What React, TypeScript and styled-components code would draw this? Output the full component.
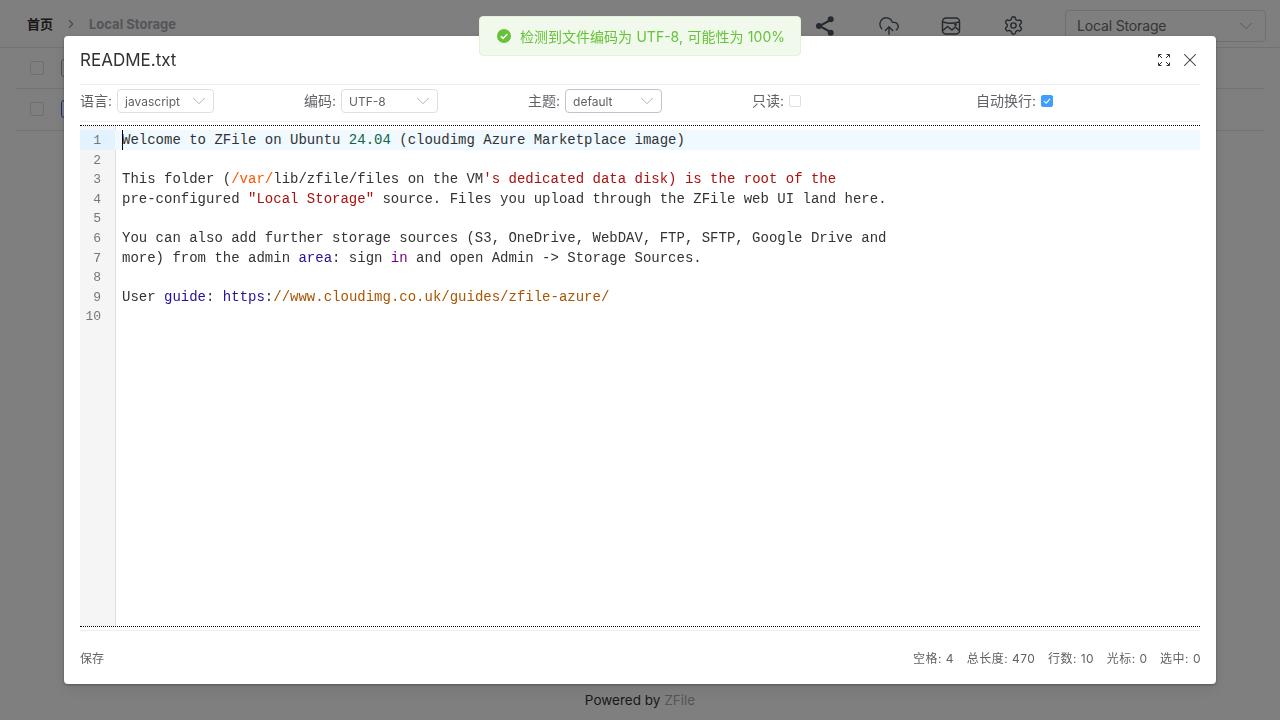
import styled, { createGlobalStyle } from 'styled-components';
import { ChevronDown, ChevronRight, CloudUpload, Settings, X } from 'lucide-react';

const sansStack = `Inter, 'Noto Sans CJK SC', sans-serif`;
const monoStack = `'Liberation Mono', monospace`;

const GlobalStyle = createGlobalStyle`
  html, body {
    margin: 0;
    padding: 0;
    background: #fff;
  }
  * {
    box-sizing: border-box;
  }
  body {
    font-family: ${sansStack};
    font-size: 14px;
    overflow: hidden;
  }
`;

type Token = { text: string; kind?: 'number' | 'regex' | 'string' | 'atom' | 'keyword' | 'comment' };

const lines: Token[][] = [
  [{ text: 'Welcome to ZFile on Ubuntu ' }, { text: '24.04', kind: 'number' }, { text: ' (cloudimg Azure Marketplace image)' }],
  [],
  [
    { text: 'This folder (' },
    { text: '/var/', kind: 'regex' },
    { text: 'lib/zfile/files on the VM' },
    { text: "'s dedicated data disk) is the root of the", kind: 'string' },
  ],
  [
    { text: 'pre-configured ' },
    { text: '"Local Storage"', kind: 'string' },
    { text: ' source. Files you upload through the ZFile web UI land here.' },
  ],
  [],
  [{ text: 'You can also add further storage sources (S3, OneDrive, WebDAV, FTP, SFTP, Google Drive and' }],
  [
    { text: 'more) from the admin ' },
    { text: 'area', kind: 'atom' },
    { text: ': sign ' },
    { text: 'in', kind: 'keyword' },
    { text: ' and open Admin -> Storage Sources.' },
  ],
  [],
  [
    { text: 'User ' },
    { text: 'guide', kind: 'atom' },
    { text: ': ' },
    { text: 'https', kind: 'atom' },
    { text: ':' },
    { text: '//www.cloudimg.co.uk/guides/zfile-azure/', kind: 'comment' },
  ],
  [],
];

const tokenColors: Record<string, string> = {
  number: '#116644',
  regex: '#ff5500',
  string: '#aa1111',
  atom: '#221199',
  keyword: '#770088',
  comment: '#aa5500',
};

const Page = styled.div`
  height: 720px;
  display: flex;
  flex-direction: column;
  background: #fff;
`;

const TopBar = styled.header`
  height: 48px;
  padding: 0 14px 0 27px;
  display: flex;
  align-items: center;
  border-bottom: 1px solid #e4e7ed;
`;

const Crumbs = styled.div`
  flex: 1;
  display: flex;
  align-items: center;
  font-size: 13px;
  font-weight: 700;
`;

const Crumb = styled.span<{ $muted?: boolean }>`
  color: ${(props) => (props.$muted ? '#a8abb2' : '#303133')};
`;

const CrumbSep = styled.span`
  width: 36px;
  display: flex;
  justify-content: center;
  color: #909399;
`;

const ToolIcons = styled.div`
  display: flex;
  align-items: center;
  gap: 40px;
  margin: 4px 41px 0 0;
  color: #4b5563;
`;

const ToolIcon = styled.span<{ $extra?: number }>`
  width: 22px;
  height: 24px;
  margin-right: ${(props) => props.$extra ?? 0}px;
  display: flex;
  align-items: center;
  justify-content: center;
`;

const StorageSelect = styled.div`
  width: 201px;
  height: 32px;
  margin-top: 4px;
  padding: 0 8px 0 11px;
  display: flex;
  align-items: center;
  justify-content: space-between;
  color: #6a6c70;
  letter-spacing: -0.15px;
  border: 1px solid #dcdfe6;
  border-radius: 4px;
`;

const FileRow = styled.div`
  height: 41px;
  margin: 0 16px 0 15px;
  padding-left: 15px;
  display: flex;
  align-items: center;
  gap: 17px;
  border-bottom: 1px solid #e4e7ed;

  & + & {
    height: 42px;
    padding-bottom: 1px;
  }
`;

const RowCheck = styled.span`
  width: 14px;
  height: 14px;
  border: 1px solid #dcdfe6;
  border-radius: 2px;
`;

const RowIcon = styled.span<{ $tint: string }>`
  width: 16px;
  height: 18px;
  border: 1.5px solid ${(props) => props.$tint};
  border-radius: 3px;
`;

const PageFooter = styled.footer`
  margin-top: auto;
  height: 41px;
  display: flex;
  align-items: center;
  justify-content: center;
  color: #333;
  font-size: 13.5px;
`;

const Brand = styled.span`
  margin-left: 4px;
  color: #a8abb2;
`;

const Overlay = styled.div`
  position: fixed;
  inset: 0;
  display: flex;
  align-items: center;
  justify-content: center;
  background: rgba(0, 0, 0, 0.5);
`;

const Dialog = styled.div`
  width: 1152px;
  height: 648px;
  padding: 0 16px;
  display: flex;
  flex-direction: column;
  background: #fff;
  border-radius: 4px;
  box-shadow: 0 1px 3px rgba(0, 0, 0, 0.3), 0 6px 16px rgba(0, 0, 0, 0.08);
`;

const DialogHeader = styled.div`
  height: 49px;
  flex: none;
  display: flex;
  align-items: center;
  justify-content: space-between;
  border-bottom: 1px solid #ebeef5;
`;

const DialogTitle = styled.div`
  font-size: 17px;
  color: #303133;
`;

const HeaderActions = styled.div`
  display: flex;
  align-items: center;
  gap: 8px;
  margin-right: -1px;
  color: #303133;
`;

const Options = styled.div`
  height: 37px;
  flex: none;
  padding-bottom: 4px;
  display: grid;
  grid-template-columns: repeat(5, 224px);
  align-items: center;
  border-bottom: 1px solid #ebeef5;
`;

const Option = styled.div`
  display: flex;
  align-items: center;
  color: #606266;
  font-size: 14px;
`;

const OptionLabel = styled.span`
  margin-bottom: 2px;
`;

const MiniSelect = styled.div<{ $active?: boolean }>`
  width: 97px;
  height: 24px;
  margin-left: 5px;
  padding: 0 3px 0 7px;
  display: flex;
  align-items: center;
  justify-content: space-between;
  font-size: 12px;
  color: #606266;
  border: 1px solid ${(props) => (props.$active ? '#c0c4cc' : '#dcdfe6')};
  border-radius: 4px;
`;

const Check = styled.span<{ $checked?: boolean }>`
  width: 12px;
  height: 12px;
  margin-left: 5px;
  display: flex;
  align-items: center;
  justify-content: center;
  background: ${(props) => (props.$checked ? '#409eff' : '#fff')};
  border: 1px solid ${(props) => (props.$checked ? '#409eff' : '#dcdfe6')};
  border-radius: 2px;
`;

const Editor = styled.div`
  flex: 1;
  min-height: 0;
  margin-top: 3px;
  padding-top: 4px;
  position: relative;
  font-family: ${monoStack};
  font-size: 14px;
  line-height: 21px;
  color: #333;
  border-top: 1px dotted #000;
  border-bottom: 1px dotted #000;
`;

const Gutter = styled.div`
  position: absolute;
  top: 0;
  bottom: 0;
  left: 0;
  width: 36px;
  background: #f5f5f5;
  border-right: 1px solid #ddd;
`;

const CodeLine = styled.div<{ $active?: boolean }>`
  height: 19.6px;
  padding-left: 42px;
  position: relative;
  white-space: pre;
  background: ${(props) => (props.$active ? '#f0f9ff' : 'transparent')};
`;

const LineNumber = styled.span<{ $active?: boolean }>`
  position: absolute;
  top: 0;
  left: 0;
  bottom: 0;
  width: 35px;
  padding-right: 14px;
  text-align: right;
  font-size: 13px;
  color: #777;
  background: ${(props) => (props.$active ? '#e2f2fe' : 'transparent')};
`;

const Caret = styled.span`
  position: absolute;
  top: 0;
  bottom: 0;
  left: 42px;
  width: 1px;
  background: #000;
`;

const Tok = styled.span<{ $kind?: string }>`
  color: ${(props) => (props.$kind ? tokenColors[props.$kind] : 'inherit')};
`;

const DialogFooter = styled.div`
  height: 54px;
  flex: none;
  margin-top: 3px;
  display: flex;
  align-items: center;
  justify-content: space-between;
  font-size: 12px;
  color: #606266;
  border-top: 1px solid #ebeef5;
`;

const Stats = styled.div`
  display: flex;
  gap: 12.5px;
  margin-right: -1px;
  letter-spacing: 0.5px;
`;

const Toast = styled.div`
  position: fixed;
  top: 16px;
  left: 479px;
  width: 322px;
  height: 40px;
  padding-left: 17px;
  display: flex;
  align-items: center;
  gap: 9px;
  font-size: 14px;
  word-spacing: 0.5px;
  color: #67c23a;
  background: #f0f9eb;
  border: 1px solid #e1f3d8;
  border-radius: 4px;
`;

const ShareIcon = () => (
  <svg width="22" height="22" viewBox="0 0 22 22" fill="currentColor">
    <path d="M16.5 5 5.5 11l11 6" fill="none" stroke="currentColor" strokeWidth="2" />
    <circle cx="16.7" cy="4.3" r="3" />
    <circle cx="5" cy="11" r="3" />
    <circle cx="16.7" cy="17.7" r="3" />
  </svg>
);

const PhotoWalletIcon = () => (
  <svg width="20" height="20" viewBox="0 0 20 20" fill="none" stroke="currentColor" strokeWidth="1.5">
    <rect x="1.5" y="2" width="17" height="16" rx="3.5" />
    <path d="M2 6c5 1.6 11 1.6 16 0" />
    <path d="M2 14.5 6.5 10.5 11 14l3.2-3 4 3.5" />
    <circle cx="14.5" cy="8.8" r="0.6" />
  </svg>
);

const FullScreenIcon = () => (
  <svg width="14" height="14" viewBox="0 0 14 14" fill="none" stroke="currentColor" strokeWidth="1">
    <path d="M1.5 4.5v-3h3M9.5 1.5h3v3M12.5 9.5v3h-3M4.5 12.5h-3v-3" />
    <path d="M2 2 5 5M12 2 9 5M12 12 9 9M2 12 5 9" />
  </svg>
);

const CircleCheck = () => (
  <svg width="14" height="14" viewBox="0 0 14 14">
    <circle cx="7" cy="7" r="7" fill="#67c23a" />
    <path d="M3.8 7.2 6.1 9.4 10.3 5" fill="none" stroke="#fff" strokeWidth="1.5" />
  </svg>
);

const TickIcon = () => (
  <svg width="8" height="8" viewBox="0 0 8 8">
    <path d="M1 4.2 3.2 6.2 7 1.8" fill="none" stroke="#fff" strokeWidth="1.1" />
  </svg>
);

const SelectArrow = () => <ChevronDown size={22} strokeWidth={1} color="#a8abb2" />;

const App = () => {
  return (
    <>
      <GlobalStyle />
      <Page>
        <TopBar>
          <Crumbs>
            <Crumb>首页</Crumb>
            <CrumbSep>
              <ChevronRight size={14} />
            </CrumbSep>
            <Crumb $muted>Local Storage</Crumb>
          </Crumbs>
          <ToolIcons>
            <ToolIcon $extra={2}>
              <ShareIcon />
            </ToolIcon>
            <ToolIcon>
              <CloudUpload size={24} strokeWidth={1.5} />
            </ToolIcon>
            <ToolIcon>
              <PhotoWalletIcon />
            </ToolIcon>
            <ToolIcon>
              <Settings size={21} strokeWidth={1.6} />
            </ToolIcon>
          </ToolIcons>
          <StorageSelect>
            Local Storage
            <SelectArrow />
          </StorageSelect>
        </TopBar>
        <FileRow>
          <RowCheck />
          <RowIcon $tint="#9ca3af" />
        </FileRow>
        <FileRow>
          <RowCheck />
          <RowIcon $tint="#2563eb" />
        </FileRow>
        <PageFooter>
          Powered by<Brand>ZFile</Brand>
        </PageFooter>
      </Page>

      <Overlay>
        <Dialog>
          <DialogHeader>
            <DialogTitle>README.txt</DialogTitle>
            <HeaderActions>
              <FullScreenIcon />
              <X size={22} strokeWidth={1.1} />
            </HeaderActions>
          </DialogHeader>
          <Options>
            <Option>
              <OptionLabel>语言:</OptionLabel>
              <MiniSelect>
                javascript
                <SelectArrow />
              </MiniSelect>
            </Option>
            <Option>
              <OptionLabel>编码:</OptionLabel>
              <MiniSelect>
                UTF-8
                <SelectArrow />
              </MiniSelect>
            </Option>
            <Option>
              <OptionLabel>主题:</OptionLabel>
              <MiniSelect $active>
                default
                <SelectArrow />
              </MiniSelect>
            </Option>
            <Option>
              <OptionLabel>只读:</OptionLabel>
              <Check />
            </Option>
            <Option>
              <OptionLabel>自动换行:</OptionLabel>
              <Check $checked>
                <TickIcon />
              </Check>
            </Option>
          </Options>
          <Editor>
            <Gutter />
            {lines.map((line, index) => (
              <CodeLine key={index} $active={index === 0}>
                <LineNumber $active={index === 0}>{index + 1}</LineNumber>
                {index === 0 && <Caret />}
                {line.map((token, tokenIndex) => (
                  <Tok key={tokenIndex} $kind={token.kind}>
                    {token.text}
                  </Tok>
                ))}
              </CodeLine>
            ))}
          </Editor>
          <DialogFooter>
            <span>保存</span>
            <Stats>
              <span>空格: 4</span>
              <span>总长度: 470</span>
              <span>行数: 10</span>
              <span>光标: 0</span>
              <span>选中: 0</span>
            </Stats>
          </DialogFooter>
        </Dialog>
      </Overlay>

      <Toast>
        <CircleCheck />
        检测到文件编码为 UTF-8, 可能性为 100%
      </Toast>
    </>
  );
};

export default App;
